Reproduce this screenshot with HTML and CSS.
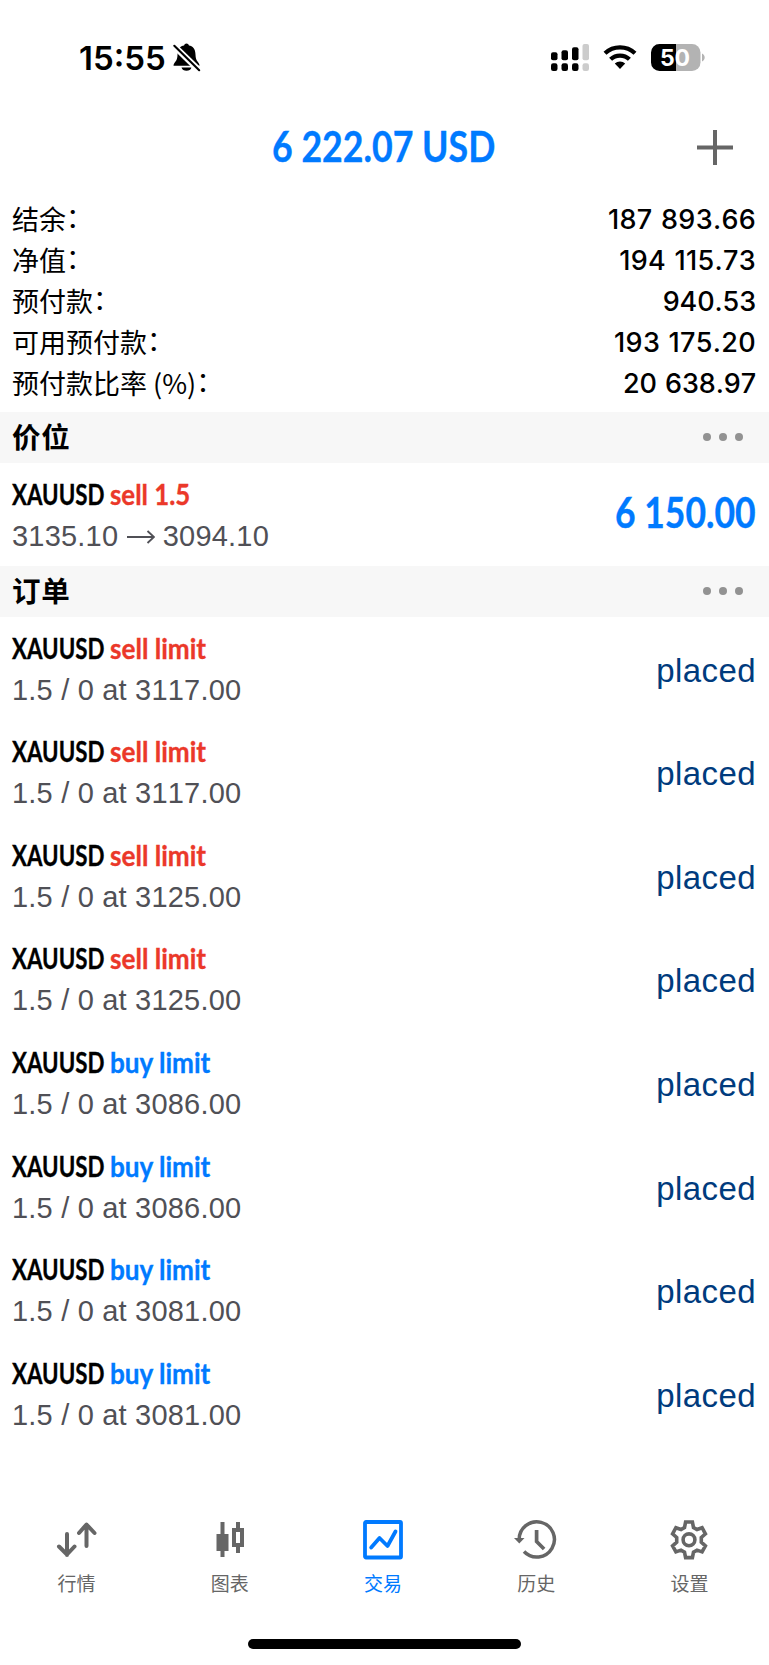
FILE: index.html
```html
<!DOCTYPE html>
<html lang="zh-CN">
<head>
<meta charset="utf-8">
<meta name="viewport" content="width=device-width">
<title>交易</title>
<link rel="stylesheet" href="styles.css">
</head>
<body>
<div class="screen">
  <header class="status">
    <div class="clock">
      <span class="time">15:55</span>
      <svg class="bell" width="30" height="30" viewBox="0 0 30 30">
        <path d="M2 23.5c0-3.5 4-4 4-11C6 6.500 9 3.500 12.500 3.200a2.600 2.600 0 0 1 5 0C21 3.500 24 6.500 24 12.500c0 7 4 7.500 4 11z" transform="translate(-.5 -.8)"/>
        <path d="M10 25.200h10c-.6 2.200-2.500 3.300-5 3.300s-4.400-1.100-5-3.300z" transform="translate(-.5 -.8)"/>
        <path d="M.5 1.500 28 28.200" stroke="#fff" stroke-width="6.200"/>
        <path d="M2.300 2.800 27.200 27.200" stroke="#000" stroke-width="2.100" stroke-linecap="round"/>
      </svg>
    </div>
    <div class="signals">
      <svg width="39" height="28" viewBox="0 0 39 28">
        <rect x="0" y="8.200" width="6.500" height="8" rx="2"/><rect x="10.500" y="6.200" width="6.500" height="10" rx="2"/><rect x="21" y="3.200" width="6.500" height="13" rx="2"/><rect x="31.500" y="0" width="6.500" height="16.200" rx="2" fill="#ccc"/>
        <rect x="0" y="19.300" width="6.500" height="7.700" rx="2.200"/><rect x="10.500" y="19.300" width="6.500" height="7.700" rx="2.200"/><rect x="21" y="19.300" width="6.500" height="7.700" rx="2.200"/><rect x="31.500" y="19.300" width="6.500" height="7.700" rx="2.200" fill="#ccc"/>
      </svg>
      <svg class="wifi" width="34" height="26" viewBox="0 0 34 26">
        <g fill="none" stroke="#000" stroke-width="4.300"><path d="M2 9.300a22 22 0 0 1 30 0"/><path d="M7.600 15.300a13.600 13.600 0 0 1 18.800 0"/></g>
        <path d="M11.800 19.600a7.600 7.600 0 0 1 10.400 0L17 24.900z"/>
      </svg>
      <svg class="battery" width="55" height="28" viewBox="0 0 55 28">
        <path d="M8.500 0H25v27H8.500A8.500 8.500 0 0 1 0 18.500v-10A8.500 8.500 0 0 1 8.500 0z"/>
        <path d="M25 0h16a8.500 8.500 0 0 1 8.500 8.500v10A8.500 8.500 0 0 1 41 27H25z" fill="#b3b3b3"/>
        <path d="M51 9.500c3.600 1.500 3.600 6.500 0 8z" fill="#b3b3b3"/>
        <text x="24" y="21.800" text-anchor="middle" class="charge">50</text>
      </svg>
    </div>
  </header>

  <div class="titlebar">
    <h1 class="cond profit-total"><span>6 222.07 USD</span></h1>
    <svg class="add" width="36" height="36" viewBox="0 0 36 36"><path d="M0 17.500h36M18 0v35" stroke="#666" stroke-width="4"/></svg>
  </div>

  <section class="account">
    <div class="line"><span>结余<i>：</i></span><b>187 893.66</b></div>
    <div class="line"><span>净值<i>：</i></span><b>194 115.73</b></div>
    <div class="line"><span>预付款<i>：</i></span><b class="tight">940.53</b></div>
    <div class="line"><span>可用预付款<i>：</i></span><b>193 175.20</b></div>
    <div class="line"><span>预付款比率 (%)<i>：</i></span><b class="tight">20 638.97</b></div>
  </section>

  <div class="section-head"><h2>价位</h2><div class="dots"><i></i><i></i><i></i></div></div>
  <div class="item">
    <div class="info">
      <div class="name"><span class="cond sym"><span>XAUUSD</span></span><span class="cond sell deal"><span>sell 1.5</span></span></div>
      <div class="detail">3135.10<svg class="arrow" width="28" height="14" viewBox="0 0 28 14"><path d="M0 7h27M20.500 1l6.500 6-6.500 6" fill="none" stroke="#505056" stroke-width="1.900"/></svg>3094.10</div>
    </div>
    <div class="cond gain"><span>6 150.00</span></div>
  </div>

  <div class="section-head"><h2>订单</h2><div class="dots"><i></i><i></i><i></i></div></div>
  <div class="item"><div class="info"><div class="name"><span class="cond sym"><span>XAUUSD</span></span><span class="cond sell"><span>sell limit</span></span></div><div class="detail">1.5 / 0 at 3117.00</div></div><div class="state">placed</div></div>
  <div class="item"><div class="info"><div class="name"><span class="cond sym"><span>XAUUSD</span></span><span class="cond sell"><span>sell limit</span></span></div><div class="detail">1.5 / 0 at 3117.00</div></div><div class="state">placed</div></div>
  <div class="item"><div class="info"><div class="name"><span class="cond sym"><span>XAUUSD</span></span><span class="cond sell"><span>sell limit</span></span></div><div class="detail">1.5 / 0 at 3125.00</div></div><div class="state">placed</div></div>
  <div class="item"><div class="info"><div class="name"><span class="cond sym"><span>XAUUSD</span></span><span class="cond sell"><span>sell limit</span></span></div><div class="detail">1.5 / 0 at 3125.00</div></div><div class="state">placed</div></div>
  <div class="item"><div class="info"><div class="name"><span class="cond sym"><span>XAUUSD</span></span><span class="cond buy"><span>buy limit</span></span></div><div class="detail">1.5 / 0 at 3086.00</div></div><div class="state">placed</div></div>
  <div class="item"><div class="info"><div class="name"><span class="cond sym"><span>XAUUSD</span></span><span class="cond buy"><span>buy limit</span></span></div><div class="detail">1.5 / 0 at 3086.00</div></div><div class="state">placed</div></div>
  <div class="item"><div class="info"><div class="name"><span class="cond sym"><span>XAUUSD</span></span><span class="cond buy"><span>buy limit</span></span></div><div class="detail">1.5 / 0 at 3081.00</div></div><div class="state">placed</div></div>
  <div class="item"><div class="info"><div class="name"><span class="cond sym"><span>XAUUSD</span></span><span class="cond buy"><span>buy limit</span></span></div><div class="detail">1.5 / 0 at 3081.00</div></div><div class="state">placed</div></div>

  <nav class="tabs">
    <div class="tab">
      <svg width="44" height="44" viewBox="0 0 44 44"><g fill="none" stroke="currentColor" stroke-width="4" stroke-linecap="round" stroke-linejoin="round"><path d="M12 16v21M4 28.500l8 8 7.500-8M31.500 28V7M24 15l7.500-8.500L39.500 15"/></g></svg>
      <span>行情</span>
    </div>
    <div class="tab">
      <svg width="44" height="44" viewBox="0 0 44 44"><path fill="currentColor" d="M12.500 4h4v12h4v17h-4v6h-4v-6H8.500V16h4zM28 4h4v6h4v19h-4v6h-4v-6h-4V10h4zM28 14v11h4V14z" fill-rule="evenodd"/></svg>
      <span>图表</span>
    </div>
    <div class="tab active">
      <svg width="44" height="44" viewBox="0 0 44 44"><g fill="none" stroke="currentColor" stroke-width="3.800" stroke-linejoin="round"><rect x="4" y="4" width="36" height="35.500" rx="1"/><path d="M10.200 29.500 18.500 20l8 8L34.500 13.500" stroke-linecap="round"/></g></svg>
      <span>交易</span>
    </div>
    <div class="tab">
      <svg width="44" height="44" viewBox="0 0 44 44"><g fill="none" stroke="currentColor" stroke-width="3.500"><path d="M5.200 22A17.600 17.600 0 1 1 10 33.500"/><path d="M22.600 12v11.500l7.500 7.500" stroke-width="3.700"/></g><path fill="currentColor" d="M0 20h10.500l-5.200 5.500z"/></svg>
      <span>历史</span>
    </div>
    <div class="tab">
      <svg width="44" height="44" viewBox="0 0 44 44"><g fill="none" stroke="currentColor" stroke-width="3.600"><path d="M18.600 4h6.800l1.100 5.500 3.500 2 5.100-1.800 3.300 6.100-4.100 3.700v4.600l4.100 3.700-3.300 6.100-5.100-1.800-3.500 2-1.100 5.500h-6.800l-1.100-5.500-3.500-2-5.100 1.800-3.300-6.100 4.100-3.700v-4.600l-4.100-3.700 3.300-6.100 5.100 1.800 3.500-2z"/><circle cx="22" cy="21.800" r="5.900"/></g></svg>
      <span>设置</span>
    </div>
  </nav>
  <div class="home"></div>
</div>
</body>
</html>
```
FILE: styles.css
```css
* { box-sizing: border-box; }
body { margin: 0; background: #fff; color: #000; font-family: "Liberation Sans", "Noto Sans CJK SC", sans-serif; }
svg { display: block; flex: none; }
.screen { width: 769px; height: 1665px; display: flex; flex-direction: column; overflow: hidden; }

.status { height: 108px; padding: 44px 63px 0 79px; display: flex; justify-content: space-between; align-items: flex-start; }
.clock { display: flex; align-items: flex-start; gap: 6px; }
.time { width: 87px; white-space: nowrap; font: 600 33px/28px Inter, sans-serif; }
.bell { margin-top: -1px; }
.signals { display: flex; align-items: flex-start; }
.wifi { margin-left: 13px; margin-top: -.5px; }
.battery { margin-left: 14px; }
.charge { font: 700 23px Inter, sans-serif; fill: #fff; }

/* Narrow lettering: each run is squeezed horizontally inside a box of its final width. */
.cond { display: block; white-space: nowrap; font-family: Lato, sans-serif; font-weight: 700; -webkit-text-stroke: .35px currentColor; }
.cond > span { display: inline-block; transform-origin: 0 50%; }

.titlebar { height: 91px; display: flex; padding: 22px 36px 0 272px; justify-content: space-between; align-items: flex-start; }
.profit-total { margin: 0; width: 224px; font-size: 42px; line-height: 33px; color: #007aff; }
.profit-total > span { transform: scaleX(.85); }

.account { height: 213px; }
.line { height: 41px; padding: 0 13px 0 12px; display: flex; justify-content: space-between; align-items: center; }
.line span { font: 400 27px/41px "Noto Sans CJK SC", sans-serif; margin-top: -2px; }
.line i { font-style: normal; position: relative; top: -2px; }
.line b { font: 500 27px/41px Inter, sans-serif; letter-spacing: .3px; word-spacing: 1px; font-kerning: none; }
.line .tight { letter-spacing: -.1px; }

.section-head { height: 50.500px; background: #f7f7f7; padding: 0 26px 0 12px; display: flex; justify-content: space-between; align-items: center; flex: none; }
.section-head h2 { margin: -2px 0 0; font: 700 28.500px/48px "Noto Sans CJK SC", sans-serif; letter-spacing: .7px; }
.dots { display: flex; gap: 8px; }
.dots i { width: 8px; height: 8px; border-radius: 50%; background: #929292; }

.item { height: 103.600px; padding: 12px 13px 0 12px; display: flex; justify-content: space-between; flex: none; }
.name { display: flex; height: 40px; }
.name .cond { font-size: 29px; line-height: 38px; }
.sym { width: 98px; }
.sym > span { transform: scaleX(.77); }
.sell { color: #eb3829; }
.buy { color: #007aff; }
.sell > span, .buy > span { transform: scaleX(.9); }
.deal > span { transform: scaleX(.89); }
.detail { display: flex; align-items: center; font-size: 29px; line-height: 42px; letter-spacing: .2px; font-kerning: none; color: #505056; white-space: pre; }
.arrow { margin: 2px 8px 0 8.500px; }
.gain { font-size: 42px; line-height: 75px; width: 141px; color: #007aff; }
.gain > span { transform: scaleX(.845); }
.state { font-size: 33px; line-height: 84px; letter-spacing: .4px; color: #003b7d; }

.tabs { display: flex; margin-top: auto; height: 121px; padding-right: 3px; flex: none; }
.tab { flex: 1; display: flex; flex-direction: column; align-items: center; color: #666; }
.tab span { font: 400 19px/26px "Noto Sans CJK SC", sans-serif; margin-top: 8px; }
.tab.active { color: #007aff; }
.home { width: 273px; height: 10px; border-radius: 5px; background: #000; margin: 0 auto 16px; flex: none; }
```
